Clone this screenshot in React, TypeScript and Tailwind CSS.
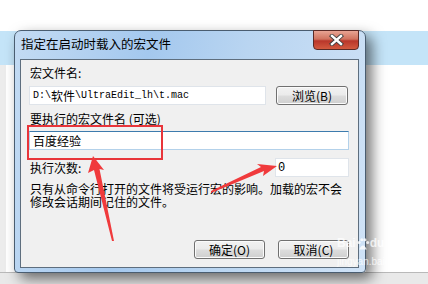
import React from 'react';

const cjk = '"Noto Sans CJK SC", "Liberation Sans", sans-serif';
const mono = '"Liberation Mono", "Noto Sans CJK SC", monospace';

function WinButton({ label, className }: { label: React.ReactNode; className?: string }) {
  return (
    <div
      className={`h-[19px] flex items-center justify-center rounded-[3px] border border-[#707070] bg-[linear-gradient(#f2f2f2_0%,#ebebeb_48%,#dddddd_52%,#cfcfcf_100%)] shadow-[inset_0_0_0_1px_#fbfbfb] text-[12px] leading-none text-black ${className ?? ''}`}
    >
      {label}
    </div>
  );
}

export default function App() {
  return (
    <div className="relative w-[428px] h-[284px] overflow-hidden bg-white" style={{ fontFamily: cjk }}>
      {/* desktop behind the dialog */}
      <div className="flex flex-col h-full">
        <div className="h-[31px] bg-white" />
        <div className="h-[34px] bg-[#c4e4f8]" />
        <div className="flex-1 bg-white flex">
          <div className="w-[6px] bg-[#ececec]" />
        </div>
        <div className="h-[12px] bg-[#e9e9e9] border-t border-[#b9b9b9]" />
      </div>

      {/* dialog window */}
      <div className="absolute left-[14px] top-[30px] w-[352px] h-[243px] rounded-t-[7px] rounded-b-[4px] border border-[#4a5d70] bg-[linear-gradient(100deg,#c3dbf3_0%,#a4c8ee_35%,#b9d5f1_60%,#cfe2f6_100%)] shadow-[6px_6px_14px_rgba(0,0,0,0.55)] flex flex-col">
        <div className="h-[28px] flex items-start justify-between pl-[6px]">
          <div className="pt-[5px] text-[12.5px] leading-[15px] text-black">指定在启动时载入的宏文件</div>
          <div className="mr-[6px] mt-[-1px] w-[46px] h-[20px] rounded-b-[4px] border border-[#5a2a26] bg-[linear-gradient(#e8a493_0%,#d0735f_45%,#b9362a_55%,#d35a3f_100%)] flex items-center justify-center">
            <svg width="15" height="12" viewBox="0 0 15 12">
              <path d="M3 2 L12 10 M12 2 L3 10" stroke="#3c3c3c" strokeWidth="4.2" strokeLinecap="square" />
              <path d="M3 2 L12 10 M12 2 L3 10" stroke="#ffffff" strokeWidth="2.4" strokeLinecap="square" />
            </svg>
          </div>
        </div>

        {/* client area */}
        <div className="ml-[5px] mr-[6px] mb-[4px] flex-1 border border-[#5e6e7e] bg-[#f0f0f0] flex flex-col pl-[8px] pt-[6px]">
          <div className="pl-[1px] text-[12px] leading-[14px] text-black">宏文件名:</div>
          <div className="mt-[6px] flex items-start">
            <div className="w-[237px] h-[19px] bg-white border border-[#dfe4ea] pl-[3px] flex items-center text-[10px] text-black" style={{ fontFamily: mono }}>
              D:\<span className="text-[12px]" style={{ fontFamily: cjk }}>软件</span>\UltraEdit_lh\t.mac
            </div>
            <WinButton className="ml-[10px] w-[72px]" label={<span>浏览(B)</span>} />
          </div>

          <div className="mt-[7px] pl-[1px] text-[12px] leading-[14px] text-black">要执行的宏文件名 (可选)</div>
          <div className="mt-[5px] w-[320px] h-[19px] bg-white border border-[#b3d1ea] border-t-[#3d7bad] pl-[3px] flex items-center text-[12px] text-black">百度经验</div>

          <div className="mt-[8px] w-[320px] flex items-center justify-between">
            <div className="pl-[1px] text-[12px] leading-[14px] text-black">执行次数:</div>
            <div className="w-[74px] h-[19px] bg-white border border-[#dfe4ea] pl-[2px] flex items-center text-[12px] text-black" style={{ fontFamily: mono }}>0</div>
          </div>

          <div className="mt-[5px] pl-[1px] text-[12px] leading-[13px] text-black">
            <div>只有从命令行打开的文件将受运行宏的影响。加载的宏不会</div>
            <div>修改会话期间记住的文件。</div>
          </div>

          <div className="mt-[32px] w-[320px] flex justify-end gap-[13px]">
            <WinButton className="w-[71px]" label={<span>确定(O)</span>} />
            <WinButton className="w-[71px]" label={<span>取消(C)</span>} />
          </div>
        </div>
      </div>

      {/* red annotation box */}
      <div className="absolute left-[27px] top-[125px] w-[136px] h-[35px] border-2 border-[#e8353a]" />

      {/* red arrows */}
      <svg className="absolute left-0 top-0" width="428" height="284" viewBox="0 0 428 284">
        <path d="M93 156 L104 170 L99.5 169 L114 241 L112 241 L94 170 L88 173 Z" fill="#f03a3c" />
        <path d="M277 166 L263 176 L264 171 L211 193 L211 191 L261 167 L257 164 Z" fill="#f03a3c" />
      </svg>

      {/* watermark */}
      <div className="absolute left-[337px] top-[236px] flex flex-col items-start text-white/75 pointer-events-none">
        <div className="flex items-center text-[12px] font-bold leading-[15px]" style={{ fontFamily: '"Liberation Sans", sans-serif' }}>
          <span>Bai</span>
          <svg width="14" height="14" viewBox="0 0 18 16">
            <circle cx="4" cy="6" r="2" fill="rgba(255,255,255,0.8)" />
            <circle cx="7.5" cy="2.5" r="2" fill="rgba(255,255,255,0.8)" />
            <circle cx="11.5" cy="2.5" r="2" fill="rgba(255,255,255,0.8)" />
            <circle cx="15" cy="6" r="2" fill="rgba(255,255,255,0.8)" />
            <path d="M4 15 Q9 5 14 15 Z" fill="rgba(255,255,255,0.8)" />
          </svg>
          <span>du</span>
          <span className="ml-[2px] text-[14px] font-normal" style={{ fontFamily: cjk }}>经验</span>
        </div>
        <div className="mt-[5px] pl-[0px] text-[10px] leading-[11px]" style={{ fontFamily: '"Liberation Sans", sans-serif' }}>jingyan.baidu.com</div>
      </div>
    </div>
  );
}
